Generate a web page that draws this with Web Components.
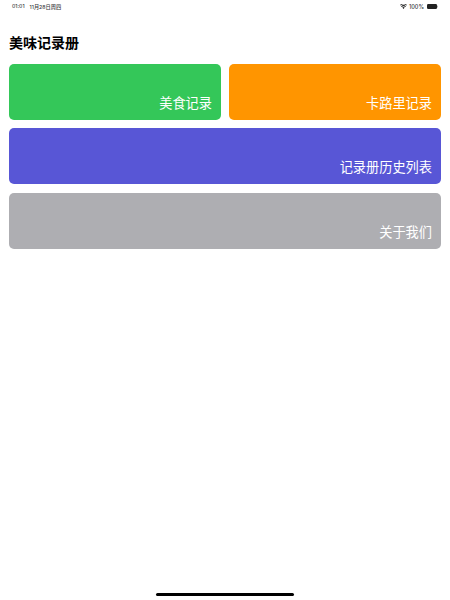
<!DOCTYPE html>
<html lang="zh">
<head>
<meta charset="utf-8">
<title>美味记录册</title>
<style>
html, body { margin: 0; height: 100%; background: #fff; }
body { font-family: "Inter", "Noto Sans CJK SC", sans-serif; }
</style>
</head>
<body>
<app-page>
  <status-bar slot="status" time="01:01" date="11月28日周四" battery="100%"></status-bar>
  <span slot="title">美味记录册</span>
  <menu-card color="#34C759">美食记录</menu-card>
  <menu-card color="#FF9500">卡路里记录</menu-card>
  <menu-card color="#5856D6" wide>记录册历史列表</menu-card>
  <menu-card color="#AEAEB2" wide>关于我们</menu-card>
</app-page>

<script>
class StatusBar extends HTMLElement {
    connectedCallback() {
        const root = this.attachShadow({ mode: "open" })
        root.innerHTML = `
<style>
:host {
  display: flex;
  align-items: center;
  justify-content: space-between;
  height: 11px;
  padding: 1px 12px 0 12px;
  font: 500 5.2px "Inter", "Noto Sans CJK SC", sans-serif;
  color: #3a3a3c;
}
.left { display: flex; gap: 5px; }
.right { display: flex; align-items: center; gap: 2px; }
svg { display: block; }
</style>
<div class="left"><span>${this.getAttribute("time")}</span><span>${this.getAttribute("date")}</span></div>
<div class="right">
  <svg width="7" height="5" viewBox="0 0 14 10">
    <path fill="#222" d="M7 10 4.6 7.2a3.6 3.6 0 0 1 4.8 0ZM3.4 5.9 2.1 4.4a7.4 7.4 0 0 1 9.8 0L10.6 5.9a5.4 5.4 0 0 0-7.2 0ZM1 3.1 0 1.9a10.6 10.6 0 0 1 14 0L13 3.1a9 9 0 0 0-12 0Z"/>
  </svg>
  <span style="font-size:5.6px; margin-right:1px">${this.getAttribute("battery")}</span>
  <svg width="11" height="5" viewBox="0 0 22 10">
    <rect width="20" height="10" rx="2.4" fill="#222"/>
    <rect x="20.6" y="3" width="1.4" height="4" rx=".7" fill="#888"/>
  </svg>
</div>`
    }
}
customElements.define("status-bar", StatusBar)

class MenuCard extends HTMLElement {
    constructor() {
        super()
        this.attachShadow({ mode: "open" })
        this.shadowRoot.innerHTML = `
<style>
:host {
  display: flex;
  align-items: flex-end;
  justify-content: flex-end;
  height: 56px;
  box-sizing: border-box;
  padding: 0 9px 8px 0;
  border-radius: 5px;
  background: var(--card-color);
  color: #fff;
  font: 400 13.2px/18px "Inter", "Noto Sans CJK SC", sans-serif;
}
:host([wide]) { grid-column: 1 / -1; }
</style>
<slot></slot>`
    }
    connectedCallback() {
        this.style.setProperty("--card-color", this.getAttribute("color"))
    }
}
customElements.define("menu-card", MenuCard)

class AppPage extends HTMLElement {
    constructor() {
        super()
        this.attachShadow({ mode: "open" })
        this.shadowRoot.innerHTML = `
<style>
:host {
  display: flex;
  flex-direction: column;
  height: 600px;
  box-sizing: border-box;
}
h1 {
  margin: 0;
  padding: 23px 9px 0;
  height: 29px;
  font: 700 14px/16px "Inter", "Noto Sans CJK SC", sans-serif;
  color: #000;
}
.grid {
  display: grid;
  grid-template-columns: 212px 212px;
  gap: 8.4px 8px;
  padding: 0 9px;
}
.home {
  width: 138px;
  height: 3px;
  margin: auto auto 4px;
  border-radius: 2px;
  background: #000;
}
</style>
<slot name="status"></slot>
<h1><slot name="title"></slot></h1>
<div class="grid"><slot></slot></div>
<div class="home"></div>`
    }
}
customElements.define("app-page", AppPage)
</script>
</body>
</html>
